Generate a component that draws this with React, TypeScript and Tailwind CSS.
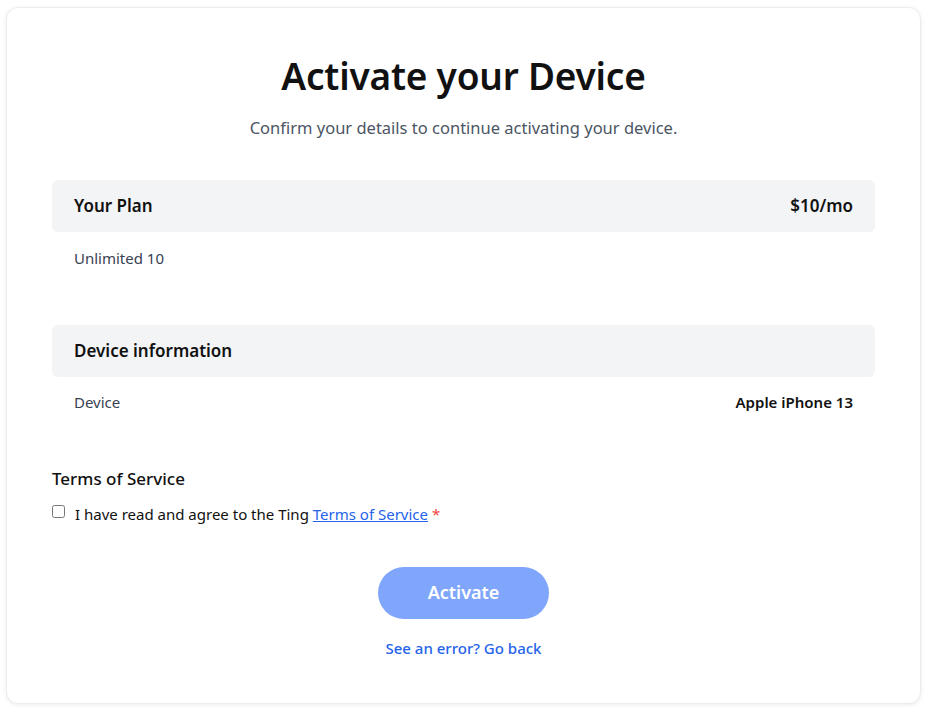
import React from 'react';

const SectionHeader: React.FC<{ title: string; right?: string }> = ({ title, right }) => (
  <div className="flex items-center justify-between h-[52px] px-[22px] bg-[#f3f4f6] rounded-md">
    <h2 className="text-[17px] font-semibold text-[#111]">{title}</h2>
    {right && <span className="text-[17px] font-semibold text-[#111]">{right}</span>}
  </div>
);

const App: React.FC = () => {
  return (
    <div className="min-h-screen bg-white pl-[6px] pt-[7px]" style={{ fontFamily: '"Noto Sans", "Open Sans", sans-serif' }}>
      <div className="w-[915px] h-[697px] rounded-xl border border-[#ececec] shadow-[0_1px_4px_rgba(0,0,0,0.08)] bg-white px-[45px] pt-[42px]">
        <div className="text-center">
          <h1 className="text-[37px] leading-[52px] font-semibold text-[#111] tracking-[-0.2px]">Activate your Device</h1>
          <p className="mt-[14px] text-[16.5px] text-[#4b5563]">Confirm your details to continue activating your device.</p>
        </div>

        <div className="mt-[39px]">
          <SectionHeader title="Your Plan" right="$10/mo" />
          <div className="px-[22px] pt-[15px] h-[93px] text-[15px] text-[#374151]">Unlimited 10</div>
        </div>

        <div>
          <SectionHeader title="Device information" />
          <div className="flex justify-between px-[22px] pt-[14px] h-[90px] text-[15px]">
            <span className="text-[#374151]">Device</span>
            <span className="font-semibold text-[#111]">Apple iPhone 13</span>
          </div>
        </div>

        <div>
          <h3 className="text-[17px] font-medium text-[#111] -mt-[1px]">Terms of Service</h3>
          <label className="mt-[12px] flex items-start gap-[10px] text-[15px] text-[#111]">
            <input type="checkbox" className="mt-[2px] w-[13px] h-[13px]" />
            <span>
              I have read and agree to the Ting{' '}
              <a href="#" className="text-[#2563eb] underline">Terms of Service</a>{' '}
              <span className="text-[#ef4444]">*</span>
            </span>
          </label>
        </div>

        <div className="mt-[41px] flex flex-col items-center">
          <button className="w-[171px] h-[52px] rounded-full bg-[#7fa6fb] text-white text-[18px] font-semibold">Activate</button>
          <a href="#" className="mt-[18px] text-[15px] font-medium text-[#2563eb]">See an error? Go back</a>
        </div>
      </div>
    </div>
  );
};

export default App;
